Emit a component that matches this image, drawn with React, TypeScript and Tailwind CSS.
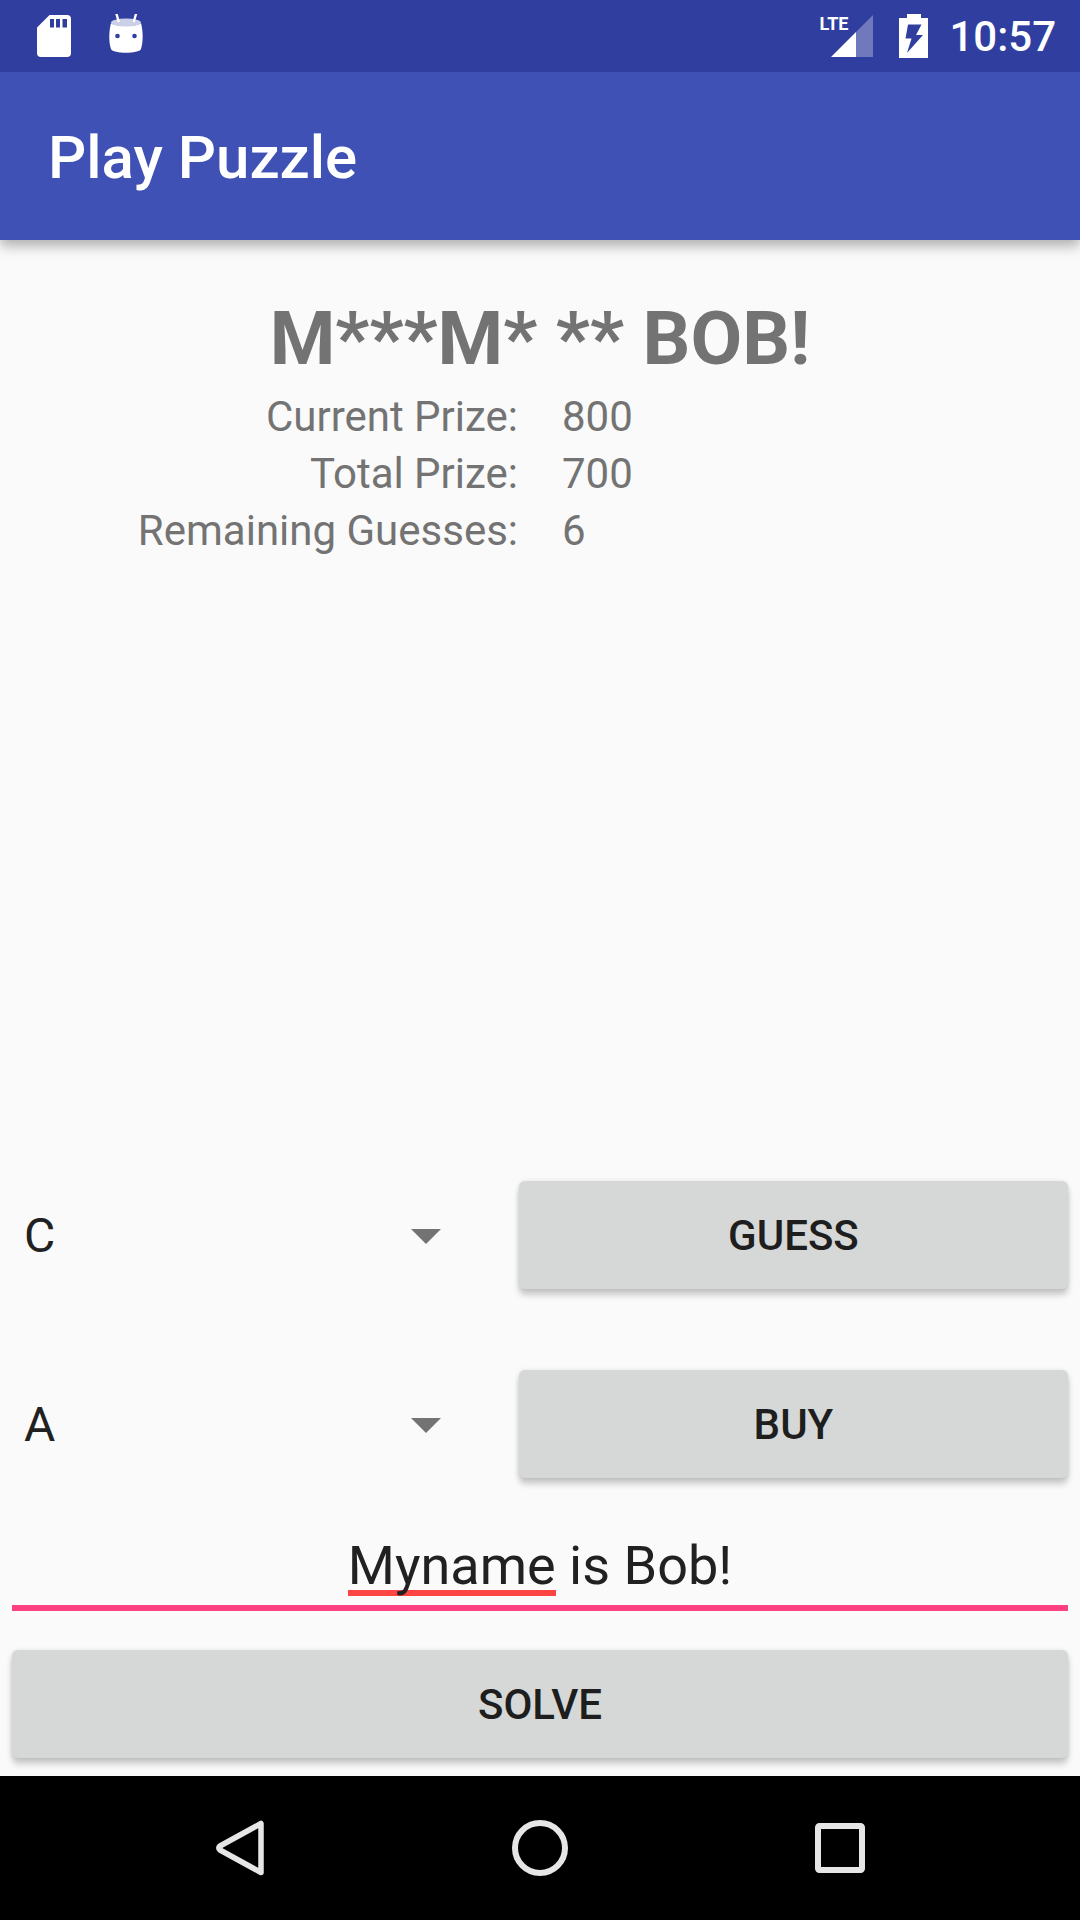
import { useState } from "react";

const stats = [
  { label: "Current Prize:", value: "800" },
  { label: "Total Prize:", value: "700" },
  { label: "Remaining Guesses:", value: "6" },
];

const consonants = "CDFGHJKLNPQRSTVWXYZ".split("");
const vowels = "AEIOU".split("");

function StatusBar() {
  return (
    <header className="relative z-10 flex h-18 items-center justify-between bg-[#303f9f] pr-6 pl-9 text-white">
      <div className="flex items-center gap-9">
        <svg width="36" height="44" viewBox="0 0 36 44" aria-label="SD card">
          <path
            fillRule="evenodd"
            fill="currentColor"
            d="M13.500 1H31a4 4 0 0 1 4 4V39a4 4 0 0 1-4 4H5a4 4 0 0 1-4-4V13.500ZM14 5V13.500H18V5ZM20 5V13.500H24V5ZM26.500 5V13.500H31V5Z"
          />
        </svg>
        <svg width="36" height="44" viewBox="0 0 36 44" aria-label="Android">
          <path
            fill="currentColor"
            d="M3 9C6 13 30 13 33 9C35 17 35.500 27 33 35C31 40 5 40 3 35C0.500 27 1 17 3 9Z"
          />
          <ellipse cx="18" cy="8.500" rx="15" ry="4" fill="#cbcfe7" />
          <path d="M8.500 0L10.500 7M28 0L26 7" stroke="currentColor" strokeWidth="2.400" strokeLinecap="round" />
          <circle cx="9.500" cy="22" r="2.300" fill="#303f9f" />
          <circle cx="26.500" cy="22" r="2.300" fill="#303f9f" />
        </svg>
      </div>
      <div className="flex items-center">
        <div className="relative h-11 w-14">
          <svg width="56" height="44" viewBox="0 0 56 44" aria-hidden="true">
            <path d="M54 1V43H37V18Z" fill="#6f79bb" />
            <path d="M37 18V43H12Z" fill="currentColor" />
          </svg>
          <span className="absolute top-0 left-0 text-lg leading-5 font-bold">LTE</span>
        </div>
        <svg width="30" height="44" viewBox="0 0 30 44" aria-label="Battery charging" className="ml-6">
          <path
            fillRule="evenodd"
            fill="currentColor"
            d="M8 0H22V4H29V44H0V4H8ZM9 10.500L6.500 24.500H12.500L8 39L24 21H17L22.500 10.500Z"
          />
        </svg>
        <time className="ml-5 pt-0.5 text-[42px] leading-13 font-medium">10:57</time>
      </div>
    </header>
  );
}

function Spinner({ label, options }: { label: string; options: string[] }) {
  return (
    <div className="relative">
      <select
        aria-label={label}
        className="h-27 w-full appearance-none bg-transparent pt-0.5 pl-3 text-[48px] leading-14 text-[#212121] outline-none"
      >
        {options.map((o) => (
          <option key={o}>{o}</option>
        ))}
      </select>
      <svg
        width="30"
        height="15"
        viewBox="0 0 30 15"
        aria-hidden="true"
        className="pointer-events-none absolute top-12 right-[78px]"
      >
        <path d="M0 0H30L15 15Z" fill="#737373" />
      </svg>
    </div>
  );
}

function RaisedButton({ children }: { children: string }) {
  return (
    <button
      type="button"
      className="h-27 w-full rounded-md bg-[#d6d8d7] pt-0.5 text-[42px] leading-12 font-medium text-[#1d1e1d] uppercase shadow-[0_6px_6px_rgba(0,0,0,0.2),0_0_4px_rgba(0,0,0,0.1)]"
    >
      {children}
    </button>
  );
}

function NavigationBar() {
  return (
    <nav className="flex h-36 items-center justify-center bg-black text-[#e6e6e6]">
      <div className="grid w-[900px] grid-cols-3">
        <button type="button" aria-label="Back" className="flex justify-center">
          <svg width="60" height="60" viewBox="0 0 60 60" fill="none">
            <path
              d="M51 5.500V54.500L10 32Q7.500 30 10 28Z"
              stroke="currentColor"
              strokeWidth="5.500"
              strokeLinejoin="round"
            />
          </svg>
        </button>
        <button type="button" aria-label="Home" className="flex justify-center">
          <svg width="60" height="60" viewBox="0 0 60 60" fill="none">
            <circle cx="30" cy="30" r="25" stroke="currentColor" strokeWidth="6" />
          </svg>
        </button>
        <button type="button" aria-label="Recent apps" className="flex justify-center">
          <svg width="60" height="60" viewBox="0 0 60 60" fill="none">
            <rect x="8" y="8" width="44" height="44" rx="1.500" stroke="currentColor" strokeWidth="6" />
          </svg>
        </button>
      </div>
    </nav>
  );
}

export default function App() {
  const [answer, setAnswer] = useState("Myname is Bob!");

  return (
    <div className="flex min-h-screen flex-col bg-[#fafafa] font-['Roboto',sans-serif]">
      <StatusBar />
      <div className="flex h-42 items-center bg-[#3f51b5] px-12 pt-1 shadow-[0_6px_12px_rgba(0,0,0,0.3)]">
        <h1 className="text-[60px] leading-18 font-medium text-white">Play Puzzle</h1>
      </div>
      <main className="flex flex-1 flex-col px-3 pt-12 pb-4.5">
        <h2 className="text-center text-[75px] leading-25 font-bold text-[#737373]">M***M* ** BOB!</h2>
        <dl className="text-[42px] leading-[57px] text-[#737373]">
          {stats.map((s) => (
            <div key={s.label} className="grid grid-cols-2 gap-11">
              <dt className="text-right">{s.label}</dt>
              <dd>{s.value}</dd>
            </div>
          ))}
        </dl>
        <form className="mt-auto" onSubmit={(e) => e.preventDefault()}>
          <div className="grid grid-cols-[12fr_13fr] gap-y-[81px]">
            <Spinner label="Consonant" options={consonants} />
            <RaisedButton>Guess</RaisedButton>
            <Spinner label="Vowel" options={vowels} />
            <RaisedButton>Buy</RaisedButton>
          </div>
          <div className="relative mt-12">
            {answer.startsWith("Myname") && (
              <span className="absolute bottom-[15px] left-1/2 -ml-48 h-1.5 w-52 bg-[#ff4444]" />
            )}
            <input
              type="text"
              aria-label="Solution"
              value={answer}
              onChange={(e) => setAnswer(e.target.value)}
              className="relative block h-[85px] w-full border-b-6 border-[#ff4081] bg-transparent text-center text-[54px] leading-16 text-[#212121] outline-none"
            />
          </div>
          <div className="mt-[39px]">
            <RaisedButton>Solve</RaisedButton>
          </div>
        </form>
      </main>
      <NavigationBar />
    </div>
  );
}
